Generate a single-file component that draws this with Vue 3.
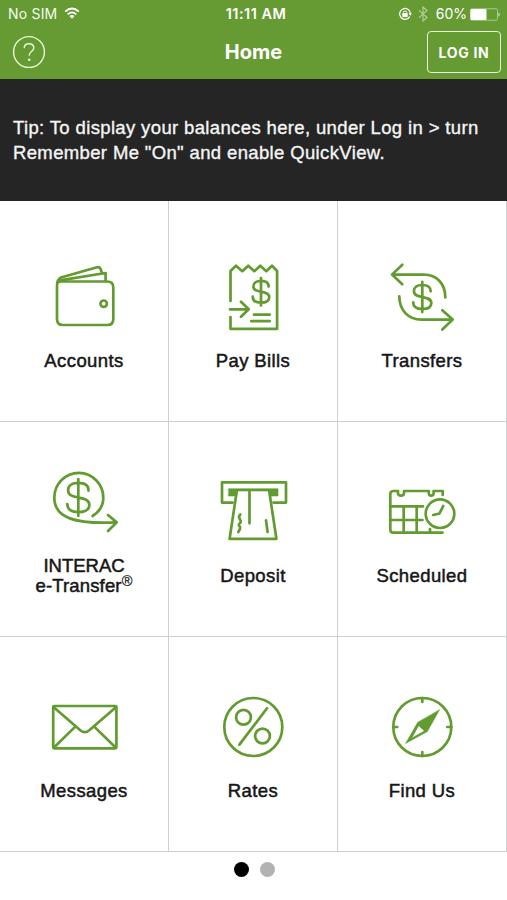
<script setup>
const dollar =
  'M7.4 -5C7.4 -8.8 4.5 -10.6 0 -10.6S-7.4 -8.5 -7.4 -5.3C-7.4 -1.5 -4 -.8 0 0S8 1.5 8 5.3C8 8.8 5 10.6 0 10.6S-8 8.8 -8 4.8M0 -13.3V13.3'

const tiles = [
  {
    label: 'Accounts',
    box: '44 257 80 80',
    paths: [
      'M57 286V319Q57 325 63 325H107.3Q113.3 325 113.3 319V287.5Q113.3 281.5 107.3 281.5H61Q57 281.5 57 285Q57 280 61 277.5L97 267.2Q100.5 266.4 101.6 272',
      'M60 280.3L105.6 273V281'
    ],
    circles: [[103.7, 303.7, 3.2]]
  },
  {
    label: 'Pay Bills',
    box: '213 257 80 80',
    paths: [
      'M230.5 301V271L236 265.7L242.3 271.2L248.3 265.7L254.3 271.2L260.3 265.7L266.3 271.2L272 265.7L277.1 271V328.8H230.5V317',
      'M230 309.3H248.5M241 301.7L248.7 309.3L241 316.7M254 314.7H269.7M251.3 321.2H269.7'
    ],
    dollar: [261, 291.7, 1.03]
  },
  {
    label: 'Transfers',
    box: '382 257 80 80',
    paths: [
      'M402.3 264.7L392 274.6L402.3 284.2M392 274.6H424C437 274.6 445.3 284 445.3 297.5',
      'M399.3 296.3C399.3 310 408 319.6 421.5 319.6H452.7M442.3 310.2L452.7 319.6L442.3 329.5'
    ],
    dollar: [422.3, 297, 1.13]
  },
  {
    label: 'INTERAC',
    second: 'e-Transfer',
    box: '44 465 80 80',
    paths: [
      'M92.6 517C99.5 512.5 103.3 506.5 103.3 499A24.5 25 0 0 0 54.3 498.7C54.3 519 75 525.3 116.3 523.4',
      'M108 516L116.7 523.4L108 532'
    ],
    dollar: [78.3, 498.5, 1.38]
  },
  {
    label: 'Deposit',
    box: '213 472 80 80',
    paths: [
      'M232.6 502.6H222V482.4H286V502.6H273.5',
      'M236.8 491L229.6 538.8H276.4L269.2 491',
      'M249.5 491V523.3M266 520.3L267.6 532',
      'M240.3 514.5C236.5 518 242 519.5 240.6 522.5C236 526 242 526 240 529L238.3 532'
    ],
    solids: ['M228.7 488.8H278V496H270L269 491H237L236 496H228.7Z']
  },
  {
    label: 'Scheduled',
    box: '382 472 80 80',
    paths: [
      'M442.7 495V491H433.6V493.3Q433.6 495.6 431.2 495.6Q428.8 495.6 428.8 493.3V491H404V493.3Q404 495.6 401 495.6Q398 495.6 398 493.3V491H393.5Q390.3 491 390.3 494.2V529.5Q390.3 532.7 393.5 532.7H442.5',
      'M390.3 506.4H423M390.3 520H422.5M403.7 506.4V532.7M416.7 506.4V532.7M430 529V532.7',
      'M433.2 515L439.5 513.5L443.2 506'
    ],
    circles: [[440, 513.7, 14.3]]
  },
  {
    label: 'Messages',
    box: '44 687 80 80',
    paths: [
      'M54.3 706H115.3Q116.4 706 116.4 707V747.2Q116.4 748.3 115.3 748.3H54.3Q53.2 748.3 53.2 747.2V707Q53.2 706 54.3 706Z',
      'M54 707.5L80.3 730.3Q84.8 734 89.3 730.3L115.6 707.5M54 747.5L74.5 727.4M115.6 747.5L95 727.4'
    ]
  },
  {
    label: 'Rates',
    box: '213 687 80 80',
    paths: ['M267 708.3L239.4 744.6'],
    circles: [
      [253.3, 727, 29],
      [243.5, 717.3, 7.4],
      [262.5, 736, 7.4]
    ]
  },
  {
    label: 'Find Us',
    box: '382 687 80 80',
    paths: ['M422.3 698V702M422.3 752V756M393.3 727H397.3M447.3 727H451.3'],
    solids: [
      'M439.4 710L427.3 731.6L405.6 743.4L417.6 722.6ZM418.6 725.8L411.6 738.2L424.3 731Z'
    ],
    circles: [[422.3, 727, 29]]
  }
]
</script>

<template>
  <div class="screen">
    <header class="top">
      <div class="status">
        <div class="left">
          <span class="carrier">No SIM</span>
          <svg class="wifi" viewBox="0 0 16 12">
            <path d="M1.2 4.6Q8 -1.5 14.8 4.6M3.7 7.3Q8 3.5 12.3 7.3" fill="none" stroke="#fff" stroke-width="1.8" />
            <path d="M5.4 9Q8 7 10.6 9L8 11.7Z" fill="#fff" />
          </svg>
        </div>
        <span class="time">11:11 AM</span>
        <div class="right">
          <svg class="lock" viewBox="0 0 14 14">
            <path d="M11.7 9.6A5.4 5.4 0 1 1 12.4 6.5" fill="none" stroke="#fff" stroke-width="1.2" />
            <path d="M10.6 6.3H14L12.3 8.8Z" fill="#fff" />
            <rect x="4.3" y="6.2" width="5.4" height="3.9" fill="#fff" />
            <path d="M5.4 6.5V5.4Q5.4 4 7 4T8.6 5.4V6.5" fill="none" stroke="#fff" />
          </svg>
          <svg class="bluetooth" viewBox="0 0 10 16">
            <path d="M1 4.3L9 11.5L5 15V1L9 4.5L1 11.7" fill="none" stroke="#b4d296" stroke-width="1.1" />
          </svg>
          <span class="percent">60%</span>
          <svg class="battery" viewBox="0 0 31 13">
            <rect x=".5" y=".8" width="27" height="11.4" rx="1.5" fill="none" stroke="#a9cb88" />
            <rect x=".5" y="1" width="16" height="11" rx="1" fill="#fff" />
            <path d="M28.6 4.2Q30.5 6.5 28.6 8.8Z" fill="#fff" />
          </svg>
        </div>
      </div>
      <div class="nav">
        <svg class="help" viewBox="0 0 34 34">
          <circle cx="17" cy="17" r="15.4" />
          <path d="M12.2 13.2Q12.2 8.8 17 8.8T21.8 13C21.8 16.5 17.2 16.2 17.2 20.7" />
          <circle class="point" cx="17.2" cy="24.7" r="1.3" />
        </svg>
        <h1>Home</h1>
        <button>LOG IN</button>
      </div>
    </header>

    <section class="tip">
      <p>Tip: To display your balances here, under Log in &gt; turn</p>
      <p>Remember Me "On" and enable QuickView.</p>
    </section>

    <main class="grid">
      <div v-for="tile in tiles" :key="tile.label" class="tile" :class="{ double: tile.second }">
        <svg class="icon" :viewBox="tile.box">
          <path v-for="d in tile.paths" :key="d" :d="d" />
          <path v-for="d in tile.solids" :key="d" class="solid" :d="d" />
          <circle v-for="c in tile.circles" :key="c.join()" :cx="c[0]" :cy="c[1]" :r="c[2]" />
          <path
            v-if="tile.dollar"
            :d="dollar"
            vector-effect="non-scaling-stroke"
            :transform="`translate(${tile.dollar[0]} ${tile.dollar[1]}) scale(${tile.dollar[2]})`"
          />
        </svg>
        <div class="label">
          {{ tile.label }}
          <div v-if="tile.second" class="second">{{ tile.second }}<sup>®</sup></div>
        </div>
      </div>
    </main>

    <div class="pager">
      <span class="dot active"></span>
      <span class="dot"></span>
    </div>
  </div>
</template>

<style>
body {
  background: #fff;
}
</style>

<style scoped>
.screen {
  width: 507px;
  height: 900px;
  overflow: hidden;
  background: #fff;
  font-family: 'Liberation Sans', sans-serif;
}
.top {
  height: 79px;
  background: #669a33;
  color: #fff;
  font-family: Inter, sans-serif;
}
.status {
  display: grid;
  grid-template-columns: 1fr auto 1fr;
  align-items: center;
  height: 28px;
  padding: 0 6px 0 8px;
  box-sizing: border-box;
  font-size: 14.5px;
  line-height: 28px;
}
.left,
.right {
  display: flex;
  align-items: center;
}
.right {
  justify-content: flex-end;
}
.carrier {
  font-size: 14px;
  letter-spacing: 0.2px;
  color: #f4faee;
}
.percent {
  font-size: 14px;
}
.wifi {
  width: 16px;
  height: 12px;
  margin-left: 7px;
  margin-bottom: 2px;
}
.time {
  margin-left: 3px;
  font-weight: 600;
  font-size: 14.5px;
  letter-spacing: 0.5px;
}
.lock {
  width: 14px;
  height: 14px;
  margin-right: 6px;
}
.bluetooth {
  width: 10px;
  height: 16px;
  margin-right: 8px;
}
.battery {
  width: 31px;
  height: 13px;
  margin-left: 3px;
}
.nav {
  display: grid;
  grid-template-columns: 1fr auto 1fr;
  align-items: center;
  height: 48px;
  padding: 0 6px 0 12px;
}
.help {
  width: 34px;
  height: 34px;
  fill: none;
  stroke: #e9f7d8;
  stroke-width: 1.4;
}
.help .point {
  fill: #e9f7d8;
  stroke: none;
}
h1 {
  margin: 0 6px 0 0;
  font-size: 20px;
  font-weight: 700;
  line-height: 24px;
}
button {
  justify-self: end;
  width: 74px;
  height: 42px;
  padding: 0;
  border: 1.5px solid #e9f3df;
  border-radius: 4px;
  background: none;
  color: #fff;
  font: 700 14px Inter, sans-serif;
  letter-spacing: 0.7px;
}
.tip {
  box-sizing: border-box;
  height: 122px;
  padding: 37px 13px 0;
  background: #252525;
  color: #f5f5f5;
  font-size: 18.5px;
  line-height: 24.5px;
  letter-spacing: 0.36px;
  white-space: nowrap;
  -webkit-text-stroke: 0.35px #f5f5f5;
}
.tip p {
  margin: 0;
}
.grid {
  display: grid;
  grid-template-columns: repeat(3, 169px);
  grid-template-rows: 221px 215px 215px;
}
.tile {
  display: flex;
  flex-direction: column;
  align-items: center;
  gap: 14px;
  padding-top: 50px;
  border-right: 1px solid #cdd0d2;
  border-bottom: 1px solid #cdd0d2;
}
.tile:nth-child(-n + 3) {
  padding-top: 56px;
}
.double {
  padding-top: 42px;
  gap: 12px;
}
.icon {
  width: 80px;
  height: 80px;
  fill: none;
  stroke: #629b2f;
  stroke-width: 2.7;
  stroke-linecap: round;
  stroke-linejoin: round;
}
.icon .solid {
  fill: #629b2f;
  fill-rule: evenodd;
  stroke-width: 0.6;
}
.label {
  color: #161616;
  font-size: 18.5px;
  line-height: 20px;
  letter-spacing: 0.4px;
  text-align: center;
  -webkit-text-stroke: 0.5px #161616;
}
.double .label {
  letter-spacing: 0;
}
.second {
  letter-spacing: 0.15px;
}
sup {
  font-size: 14.5px;
  line-height: 0;
  vertical-align: 6px;
  -webkit-text-stroke: 0.2px #161616;
}
.pager {
  display: flex;
  justify-content: center;
  gap: 11px;
  padding: 10px 0 0 1px;
}
.dot {
  width: 15px;
  height: 15px;
  border-radius: 50%;
  background: #b2b2b2;
}
.active {
  background: #000;
}
</style>
